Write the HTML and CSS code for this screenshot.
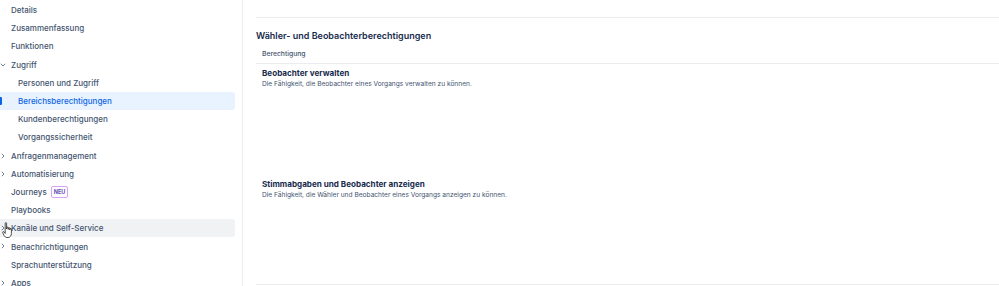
FILE: index.html
```html
<!DOCTYPE html>
<html lang="de">
<head>
  <meta charset="UTF-8">
  <title>Bereichsberechtigungen</title>
  <link rel="stylesheet" href="styles.css">
</head>
<body>
  <div class="layout">
    <nav class="sidebar">
      <div class="nav-item">Details</div>
      <div class="nav-item">Zusammenfassung</div>
      <div class="nav-item">Funktionen</div>
      <div class="nav-item has-toggle open"><span class="chev">
        <svg width="6" height="6" viewBox="0 0 6 6"><path d="M0.8 1.8 L3 4 L5.2 1.8" fill="none" stroke="#626f86" stroke-width="0.9"/></svg></span>Zugriff</div>
      <div class="nav-item sub">Personen und Zugriff</div>
      <div class="nav-item sub active">Bereichsberechtigungen</div>
      <div class="nav-item sub">Kundenberechtigungen</div>
      <div class="nav-item sub">Vorgangssicherheit</div>
      <div class="nav-item has-toggle"><span class="chev">
        <svg width="6" height="6" viewBox="0 0 6 6"><path d="M1.8 0.8 L4 3 L1.8 5.2" fill="none" stroke="#626f86" stroke-width="0.9"/></svg></span>Anfragenmanagement</div>
      <div class="nav-item has-toggle"><span class="chev">
        <svg width="6" height="6" viewBox="0 0 6 6"><path d="M1.8 0.8 L4 3 L1.8 5.2" fill="none" stroke="#626f86" stroke-width="0.9"/></svg></span>Automatisierung</div>
      <div class="nav-item">Journeys <span class="badge">NEU</span></div>
      <div class="nav-item">Playbooks</div>
      <div class="nav-item has-toggle hover"><span class="chev">
        <svg width="6" height="6" viewBox="0 0 6 6"><path d="M1.8 0.8 L4 3 L1.8 5.2" fill="none" stroke="#626f86" stroke-width="0.9"/></svg></span>Kanäle und Self-Service
        <svg class="cursor" width="12" height="17" viewBox="0 0 12 17"><path d="M3.2 1.2 C3.2 0.5 4.6 0.5 4.6 1.2 L4.6 7 L4.8 5.6 C4.8 4.9 6.2 4.9 6.2 5.6 L6.2 7.4 L6.4 6.2 C6.4 5.5 7.8 5.5 7.8 6.2 L7.8 8 L8 7 C8 6.3 9.4 6.3 9.4 7 L9.4 11.5 C9.4 13.6 8.2 15.5 6 15.5 L5 15.5 C3.6 15.5 2.8 14.6 2 13.4 L0.7 10.6 C0.3 9.8 1.3 9.2 1.9 9.9 L3.2 11.4 Z" fill="#fff" stroke="#222" stroke-width="0.8" stroke-linejoin="round"/></svg>
      </div>
      <div class="nav-item has-toggle"><span class="chev">
        <svg width="6" height="6" viewBox="0 0 6 6"><path d="M1.8 0.8 L4 3 L1.8 5.2" fill="none" stroke="#626f86" stroke-width="0.9"/></svg></span>Benachrichtigungen</div>
      <div class="nav-item">Sprachunterstützung</div>
      <div class="nav-item has-toggle"><span class="chev">
        <svg width="6" height="6" viewBox="0 0 6 6"><path d="M1.8 0.8 L4 3 L1.8 5.2" fill="none" stroke="#626f86" stroke-width="0.9"/></svg></span>Apps</div>
    </nav>

    <main class="content">
      <div class="top-rule"></div>
      <h3 class="section-title">Wähler- und Beobachterberechtigungen</h3>
      <table class="perm-table">
        <thead>
          <tr><th>Berechtigung</th></tr>
        </thead>
        <tbody>
          <tr class="row-first">
            <td>
              <div class="perm-name">Beobachter verwalten</div>
              <div class="perm-desc">Die Fähigkeit, die Beobachter eines Vorgangs verwalten zu können.</div>
            </td>
          </tr>
          <tr class="row-last">
            <td>
              <div class="perm-name">Stimmabgaben und Beobachter anzeigen</div>
              <div class="perm-desc">Die Fähigkeit, die Wähler und Beobachter eines Vorgangs anzeigen zu können.</div>
            </td>
          </tr>
        </tbody>
      </table>
    </main>
  </div>
</body>
</html>
```

FILE: styles.css
```css
body {
  margin: 0;
  background: #fff;
  font-family: Inter, "Noto Sans", sans-serif;
  color: #172b4d;
  overflow: hidden;
}

.layout {
  display: flex;
  height: 286px;
}

/* seitenleiste */
.sidebar {
  width: 243px;
  flex-shrink: 0;
  border-right: 1px solid #ebecf0;
  padding: 1px 7px 0 0;
  box-sizing: border-box;
  overflow: hidden;
}

.nav-item {
  position: relative;
  display: flex;
  align-items: center;
  height: 18.2px;
  padding-left: 11px;
  font-size: 8px;
  font-weight: 500;
  color: #44546f;
  border-radius: 0 3px 3px 0;
  white-space: nowrap;
}

.nav-item.sub {
  padding-left: 18px;
}

.nav-item.active {
  background: #e9f2ff;
  color: #0c66e4;
}

.nav-item.active::before {
  content: "";
  position: absolute;
  left: 0;
  top: 5px;
  bottom: 5px;
  width: 2px;
  background: #0c66e4;
  border-radius: 0 1px 1px 0;
}

.nav-item.hover {
  background: #f1f2f4;
}

.chev {
  position: absolute;
  left: 0;
  top: 6px;
  display: flex;
}

.badge {
  margin-left: 4px;
  font-size: 5.5px;
  font-weight: 700;
  color: #5e4db2;
  border: 1px solid #d8a0f7;
  border-radius: 2px;
  padding: 1px 2px;
  line-height: 8px;
}

.cursor {
  position: absolute;
  left: 2px;
  top: 3px;
}

/* inhalt */
.content {
  flex: 1;
  padding-left: 13px;
  min-width: 0;
}

.top-rule {
  height: 17px;
  border-bottom: 1px solid #ebecf0;
}

.section-title {
  margin: 11px 0 0;
  font-size: 9px;
  font-weight: 600;
  color: #172b4d;
  line-height: 14px;
}

.perm-table {
  width: 100%;
  border-collapse: collapse;
  margin-top: 3px;
}

.perm-table th {
  text-align: left;
  font-size: 6.8px;
  font-weight: 500;
  color: #44546f;
  line-height: 10px;
  padding: 3px 0 4px 6px;
  border-bottom: 1px solid #ebecf0;
}

.perm-table td {
  box-sizing: border-box;
  padding: 4px 0 0 6px;
  vertical-align: top;
}

.row-first td {
  height: 111px;
}

.row-last td {
  height: 110px;
  border-bottom: 1px solid #ebecf0;
}

.perm-name {
  font-size: 8.1px;
  font-weight: 700;
  color: #172b4d;
  line-height: 10px;
  margin-bottom: 2px;
}

.perm-desc {
  font-size: 6.6px;
  color: #44546f;
  line-height: 9px;
}
```
